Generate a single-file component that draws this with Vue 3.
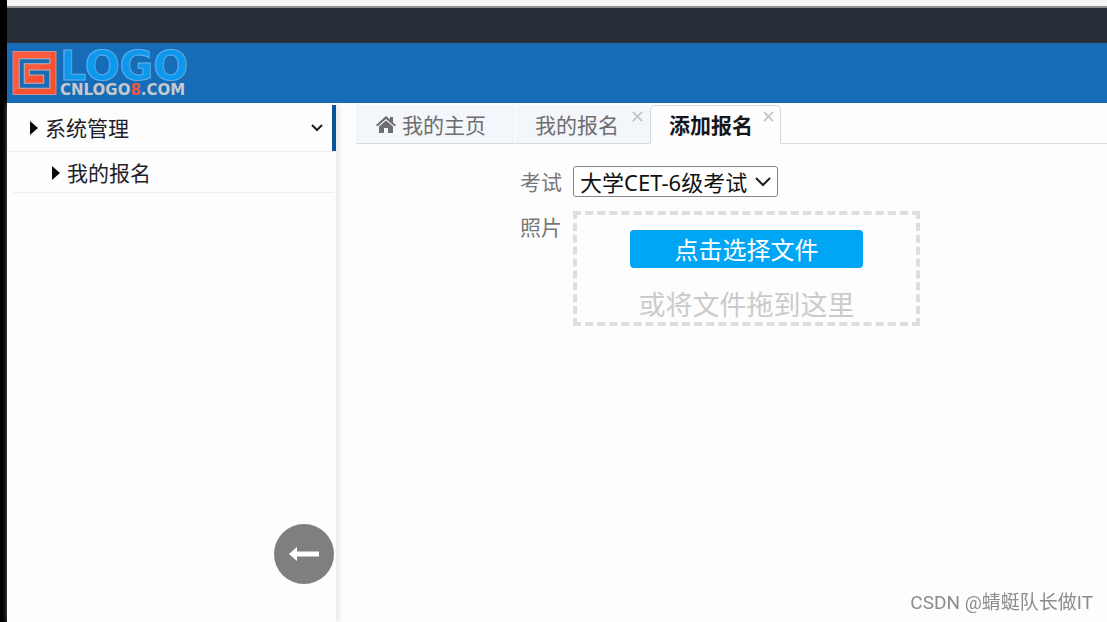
<script setup>
import { ref } from 'vue'

const exams = ['大学CET-6级考试']
const exam = ref(exams[0])
const tabs = [
  { name: '我的主页', home: true },
  { name: '我的报名', closable: true },
  { name: '添加报名', closable: true },
]
const current = ref('添加报名')
</script>

<template>
  <div class="screen">
    <div class="browser-edge"></div>
    <div class="top-strip"></div>

    <header class="header">
      <a class="brand" href="#" aria-label="LOGO">
        <svg class="mark" viewBox="0 0 44 44" aria-hidden="true">
          <path d="M1 1H43V43H1Z" fill="#fb5a3c" />
          <path d="M1 43L43 1V43Z" fill="#f9502f" />
          <path
            d="M37 8H7V37H37V19H17V24H31V32H12V13H37Z"
            fill="#196bb5"
            stroke="#b9b3bd"
            stroke-width="1"
          />
          <path d="M1 1H43V43H1Z" fill="none" stroke="#c98f94" stroke-width="1" />
        </svg>
        <span class="brand-text">
          <span class="brand-name">LOGO</span>
          <span class="brand-site">CNLOGO<b>8</b>.COM</span>
        </span>
      </a>
    </header>

    <div class="body">
      <aside class="sidebar">
        <nav>
          <a class="menu-item parent" href="#">
            <svg class="caret" viewBox="0 0 8 14" aria-hidden="true"><path d="M0 0L8 7L0 14Z" /></svg>
            <span>系统管理</span>
            <svg class="chevron" viewBox="0 0 14 10" aria-hidden="true"><path d="M2 2L7 7L12 2" /></svg>
          </a>
          <a class="menu-item child" href="#">
            <svg class="caret" viewBox="0 0 8 14" aria-hidden="true"><path d="M0 0L8 7L0 14Z" /></svg>
            <span>我的报名</span>
          </a>
        </nav>
        <button class="collapse" type="button" aria-label="收起菜单">
          <svg viewBox="0 0 30 16" aria-hidden="true"><path d="M0 8L8 1V5.500H30V10.500H8V15Z" /></svg>
        </button>
      </aside>

      <main class="main">
        <div class="tabs">
          <div v-for="tab in tabs" :key="tab.name" class="tab" :class="{ active: current === tab.name }">
            <button class="tab-label" type="button" @click="current = tab.name">
              <svg v-if="tab.home" class="home" viewBox="0 0 20 17" aria-hidden="true">
                <path d="M10 0L14 3.600V1H17V6.400L20 9L18.700 10.500L10 3L1.300 10.500L0 9Z" />
                <path d="M10 4.500L17 10.500V17H12V12H8V17H3V10.500Z" />
              </svg>
              {{ tab.name }}
            </button>
            <button v-if="tab.closable" class="close" type="button" :aria-label="'关闭' + tab.name">
              <svg viewBox="0 0 12 12" aria-hidden="true"><path d="M1 1L11 11M11 1L1 11" /></svg>
            </button>
          </div>
        </div>

        <form class="form" @submit.prevent>
          <label class="label" for="exam">考试</label>
          <div class="select-wrap">
            <select id="exam" v-model="exam">
              <option v-for="item in exams" :key="item">{{ item }}</option>
            </select>
            <svg class="select-arrow" viewBox="0 0 16 10" aria-hidden="true"><path d="M1 1L8 8L15 1" /></svg>
          </div>
          <span class="label">照片</span>
          <div class="dropzone">
            <button class="pick" type="button">点击选择文件</button>
            <p class="hint">或将文件拖到这里</p>
          </div>
        </form>
      </main>
    </div>

    <div class="watermark">CSDN @蜻蜓队长做IT</div>
  </div>
</template>

<style>
body {
  margin: 0;
}
</style>

<style scoped>
.screen {
  box-sizing: border-box;
  display: flex;
  flex-direction: column;
  min-height: 100vh;
  border-left: 7px solid #000;
  background: #fdfdfd;
  font-family: "Noto Sans", "Noto Sans CJK SC", sans-serif;
  font-size: 21px;
  line-height: 30px;
}

button,
select {
  font: inherit;
}

button {
  padding: 0;
  border: 0;
  background: none;
}

a {
  color: inherit;
  text-decoration: none;
}

svg {
  display: block;
  flex: none;
}

.browser-edge {
  height: 6px;
  border-bottom: 2px solid #8c8f91;
  background: #f5f5f5;
}

.top-strip {
  height: 35px;
  background: #282f38;
}

.header {
  position: relative;
  z-index: 1;
  display: flex;
  align-items: center;
  height: 60px;
  padding-left: 5px;
  background: #176cb7;
}

.brand {
  display: flex;
  align-items: center;
  gap: 3px;
}

.mark {
  width: 45px;
  height: 46px;
}

.brand-text {
  display: flex;
  flex-direction: column;
  padding-top: 1px;
  font-family: "DejaVu Sans", sans-serif;
  font-weight: bold;
}

.brand-name {
  color: #0c98ec;
  font-size: 41px;
  line-height: 33px;
  -webkit-text-stroke: 1px #62aee6;
}

.brand-site {
  color: #c5c9ce;
  font-size: 15px;
  line-height: 14px;
}

.brand-site b {
  color: #f2553f;
}

.body {
  display: flex;
  flex: 1;
}

.sidebar {
  position: relative;
  flex: none;
  width: 329px;
  box-shadow: 2px 0 6px #e4e4e4;
  color: #1d2129;
}

.menu-item {
  display: flex;
  align-items: center;
  box-sizing: border-box;
  border-bottom: 1px solid #eeeef0;
}

.parent {
  height: 49px;
  padding: 2px 9px 0 23px;
  gap: 7px;
  background: linear-gradient(#08549b, #08549b) right top 2px / 4px 46px no-repeat;
}

.parent .chevron {
  margin-right: 3px;
}

.child {
  height: 41px;
  margin: 0 2px 0 6px;
  padding: 2px 0 0 39px;
  gap: 7px;
}

.caret {
  width: 8px;
  height: 14px;
  fill: #08090c;
}

.chevron {
  width: 14px;
  height: 10px;
  margin-left: auto;
}

.chevron path,
.select-arrow path {
  fill: none;
  stroke: #1c1f24;
  stroke-width: 2;
}

.collapse {
  position: absolute;
  right: 2px;
  bottom: 38px;
  display: flex;
  align-items: center;
  justify-content: center;
  width: 60px;
  height: 60px;
  border-radius: 50%;
  background: #7f7f7f;
}

.collapse svg {
  width: 30px;
  height: 16px;
  fill: #fff;
}

.main {
  flex: 1;
  min-width: 0;
  padding: 2px 0 0 20px;
}

.tabs {
  display: flex;
  height: 39px;
  box-shadow: inset 0 -1px #dadde2;
}

.tab {
  position: relative;
  box-sizing: border-box;
  padding: 0 28px 0 19px;
  border: 1px solid #f3f5f9;
  border-bottom-color: #d5d9df;
  background: #f3f6fa;
  color: #6e6e6e;
}

.tab + .tab {
  padding: 0 30px 0 19px;
}

.tab + .tab.active {
  padding: 0 27px 0 18px;
}

.tab.active {
  border-color: #d5d9df;
  border-bottom-color: #fdfdfd;
  border-radius: 5px 5px 0 0;
  background: #fdfdfd;
  color: #15171a;
  font-weight: bold;
}

.tab + .tab:not(.active) {
  border-left-color: #fff;
}

.tab-label {
  display: flex;
  align-items: center;
  gap: 6px;
  height: 37px;
  color: inherit;
}

.home {
  width: 20px;
  height: 17px;
  fill: #6e6e6e;
}

.close {
  position: absolute;
  top: 5px;
  right: 6px;
}

.close svg {
  width: 11px;
  height: 11px;
}

.close path {
  fill: none;
  stroke: #c4c4c4;
  stroke-width: 2;
}

.form {
  display: grid;
  grid-template-columns: 206px minmax(0, 347px);
  column-gap: 11px;
  row-gap: 14px;
  padding-top: 22px;
}

.label {
  padding-top: 1px;
  color: #777;
  text-align: right;
}

.select-wrap {
  position: relative;
  justify-self: start;
}

select {
  display: block;
  width: 205px;
  height: 31px;
  padding: 0 0 0 6px;
  border: 1px solid #858585;
  border-radius: 3px;
  appearance: none;
  background: #fff;
  color: #111;
  font-size: 22px;
}

.select-arrow {
  position: absolute;
  top: 11px;
  right: 7px;
  width: 16px;
  height: 10px;
  pointer-events: none;
}

.dropzone {
  box-sizing: border-box;
  padding: 15px 53px 0;
  border: 4px dashed #dedede;
  text-align: center;
}

.pick {
  width: 100%;
  height: 38px;
  padding-top: 2px;
  border-radius: 4px;
  background: #00a5f4;
  color: #fff;
  font-size: 24px;
}

.hint {
  margin: 20px 0 0;
  color: #cbcbcb;
  font-size: 27px;
  line-height: 34px;
  white-space: nowrap;
}

.watermark {
  position: fixed;
  right: 14px;
  bottom: 5px;
  color: #8c8c8c;
  font-family: Roboto, "Noto Sans CJK SC", sans-serif;
  font-size: 19px;
  line-height: 28px;
}
</style>
